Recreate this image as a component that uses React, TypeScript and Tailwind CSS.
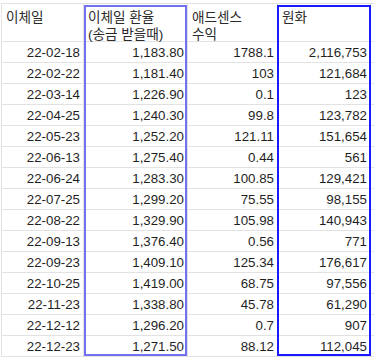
import { Fragment } from "react";

const rows: [string, string, string, string][] = [
  ["22-02-18", "1,183.80", "1788.1", "2,116,753"],
  ["22-02-22", "1,181.40", "103", "121,684"],
  ["22-03-14", "1,226.90", "0.1", "123"],
  ["22-04-25", "1,240.30", "99.8", "123,782"],
  ["22-05-23", "1,252.20", "121.11", "151,654"],
  ["22-06-13", "1,275.40", "0.44", "561"],
  ["22-06-24", "1,283.30", "100.85", "129,421"],
  ["22-07-25", "1,299.20", "75.55", "98,155"],
  ["22-08-22", "1,329.90", "105.98", "140,943"],
  ["22-09-13", "1,376.40", "0.56", "771"],
  ["22-09-23", "1,409.10", "125.34", "176,617"],
  ["22-10-25", "1,419.00", "68.75", "97,556"],
  ["22-11-23", "1,338.80", "45.78", "61,290"],
  ["22-12-12", "1,296.20", "0.7", "907"],
  ["22-12-23", "1,271.50", "88.12", "112,045"],
];

function HeaderCell({ children }: { children?: React.ReactNode }) {
  return (
    <div className="h-[38px] border-r border-b border-[#e2e2e2] pl-[4px] pt-[5px] text-[13.6px] leading-[17px] text-[#2a2a2a]">
      {children}
    </div>
  );
}

function Cell({ value }: { value: string }) {
  return (
    <div className="flex h-[21px] items-end justify-end border-r border-b border-[#e2e2e2] pr-[3px] pb-[2px] leading-[15px]">
      {value}
    </div>
  );
}

export default function App() {
  return (
    <div className="relative h-[358px] w-[374px] overflow-hidden bg-white font-['Liberation_Sans','Noto_Sans_CJK_KR',sans-serif] text-[13.3px] text-[#1f1f1f]">
      <div className="mt-[3px] ml-px grid grid-cols-[82px_104px_90px_93px_1fr] border-t border-l border-[#e2e2e2]">
        <HeaderCell>이체일</HeaderCell>
        <HeaderCell>
          이체일 환율
          <br />
          (송금 받을때)
        </HeaderCell>
        <HeaderCell>
          애드센스
          <br />
          수익
        </HeaderCell>
        <HeaderCell>원화</HeaderCell>
        <HeaderCell />
        {rows.map((r) => (
          <Fragment key={r[0]}>
            <Cell value={r[0]} />
            <Cell value={r[1]} />
            <Cell value={r[2]} />
            <Cell value={r[3]} />
            <div className="h-[21px] border-b border-[#e2e2e2]" />
          </Fragment>
        ))}
      </div>

      {/* selection outlines */}
      <div className="pointer-events-none absolute top-[5px] left-[84px] h-[351px] w-[103px] border-2 border-[#7171f2]" />
      <div className="pointer-events-none absolute top-[5px] left-[277px] h-[351px] w-[94px] border-2 border-[#1a1aff]" />
    </div>
  );
}
